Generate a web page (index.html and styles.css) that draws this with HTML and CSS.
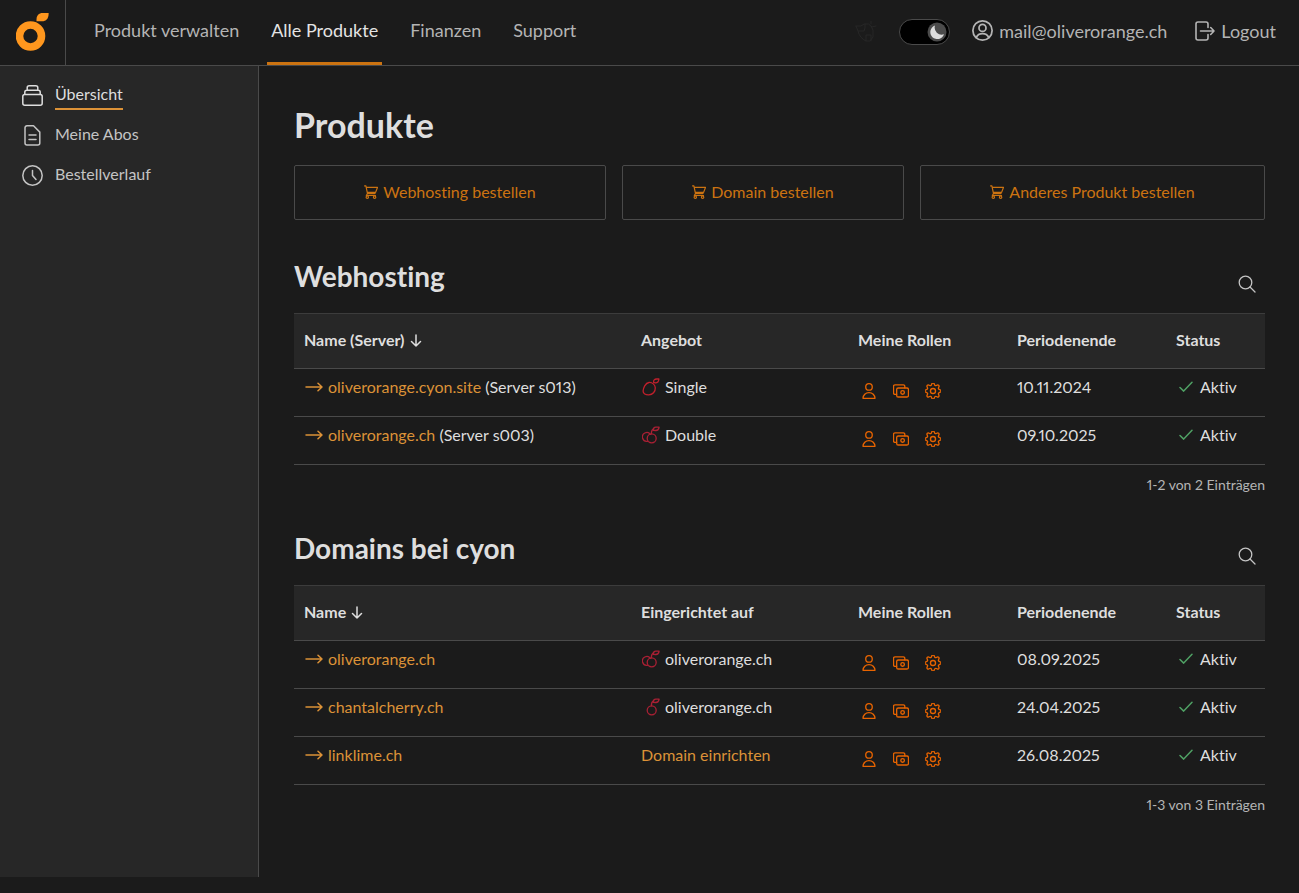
FILE: index.html
```html
<!DOCTYPE html>
<html lang="de">
<head>
<meta charset="utf-8">
<meta name="viewport" content="width=device-width, initial-scale=1">
<title>Produkte</title>
<link rel="stylesheet" href="styles.css">
</head>
<body>
<svg class="sprite" aria-hidden="true">
  <symbol id="i-person" viewBox="0 0 24 24"><circle cx="12" cy="5.900" r="4.900"/><path d="M3 23a9 8.600 0 0 1 18 0z"/></symbol>
  <symbol id="i-money" viewBox="0 0 24 24"><path d="M5.500 17H3a2.200 2.200 0 0 1-2.200-2.200V5a2.200 2.200 0 0 1 2.200-2.200h12.500a2.200 2.200 0 0 1 2.200 2.200v2.300"/><rect x="5.500" y="7.500" width="17.700" height="13.500" rx="2.400"/><circle cx="14.400" cy="14.200" r="2.700"/></symbol>
  <symbol id="i-gear" viewBox="0 0 24 24"><circle cx="12" cy="12" r="3.800"/><path transform="rotate(22.500 12 12)" d="M10.546 2.438a1.957 1.957 0 0 0 2.908 0L14.4 1.400a1.959 1.959 0 0 1 3.410 1.413l-.071 1.400A1.958 1.958 0 0 0 19.790 6.270l1.400-.071a1.959 1.959 0 0 1 1.410 3.410l-1.042.940a1.960 1.960 0 0 0 0 2.909l1.042.940a1.959 1.959 0 0 1-1.413 3.410l-1.400-.071a1.958 1.958 0 0 0-2.056 2.056l.071 1.400A1.959 1.959 0 0 1 14.400 22.600l-.941-1.041a1.959 1.959 0 0 0-2.908 0L9.606 22.600A1.959 1.959 0 0 1 6.200 21.192l.072-1.400a1.958 1.958 0 0 0-2.056-2.056l-1.400.071A1.958 1.958 0 0 1 1.400 14.400l1.041-.940a1.960 1.960 0 0 0 0-2.909L1.400 9.606A1.958 1.958 0 0 1 2.813 6.200l1.400.071a1.958 1.958 0 0 0 2.058-2.060L6.200 2.810A1.959 1.959 0 0 1 9.606 1.400z"/></symbol>
  <symbol id="i-arrow" viewBox="0 0 18 12"><path d="M1 6h16M13 2.300 17 6l-4 3.700"/></symbol>
  <symbol id="i-down" viewBox="0 0 12 14"><path d="M6 2v11M1.500 8.500 6 13l4.500-4.500"/></symbol>
  <symbol id="i-check" viewBox="0 0 14 12"><path d="m1 6.500 3.700 3.600L13 1.300"/></symbol>
  <symbol id="i-search" viewBox="0 0 18 18"><circle cx="7.500" cy="7.500" r="6.300"/><path d="m12 12 5 5"/></symbol>
  <symbol id="i-cart" viewBox="0 0 14 14"><path d="M.600.900h1.300l1.600 7.700h7.600M2.500 2.400h11l-1.900 5H3.300M3.500 8.600 2.300 10.500h9.200"/><circle cx="3.300" cy="12.200" r="1.200"/><circle cx="10.600" cy="12.200" r="1.200"/></symbol>
  <symbol id="i-single" viewBox="0 0 18 18"><path d="M7 4.500c3.300-.300 6.100 2.200 6.300 5.300.200 4-2.700 6.900-6.500 7-3.200.100-5.800-1-5.700-3.700.100-2.800 2.200-8.200 5.900-8.600z"/><path d="M11.600 4.300c-.300-2 1-3.300 3-3.300h2.300c-.200 2.400-1.700 4-3.700 3.900z"/></symbol>
  <symbol id="i-double" viewBox="0 0 18 18"><circle cx="9.700" cy="12.300" r="4.500"/><path d="M5.500 15.300a4.400 4.400 0 1 1 2.900-6.900M9.400 7.800c-.200-2.700.300-4.100 2.400-5"/><path d="M11.200 4.300c-.200-2 .900-3.100 2.700-3.100h3.200c-.300 2.300-1.500 3.500-3.600 3.300z"/></symbol>
  <symbol id="i-cherry" viewBox="0 0 18 18"><circle cx="9.700" cy="12.300" r="4.500"/><path d="M9.400 7.800c-.200-2.700.300-4.100 2.400-5"/><path d="M11.200 4.300c-.200-2 .900-3.100 2.700-3.100h3.200c-.300 2.300-1.500 3.500-3.600 3.300z"/></symbol>
</svg>

<div class="page">
  <header class="topbar">
    <a class="brand" href="#" aria-label="Startseite">
      <svg width="34" height="38" viewBox="0 0 34 38"><circle cx="14.500" cy="23" r="11" fill="none" stroke="#ff971e" stroke-width="7.600"/><path d="M20.500 8.200V6.500c0-3.900 2.300-6.500 6.200-6.500h5.900v.900c0 4.400-2.400 7.300-6.700 7.300z" fill="#ff971e"/></svg>
    </a>
    <nav class="mainnav">
      <a href="#">Produkt verwalten</a>
      <a class="active" href="#" aria-current="page">Alle Produkte</a>
      <a href="#">Finanzen</a>
      <a href="#">Support</a>
    </nav>
    <div class="account">
      <svg class="bird" width="22" height="22" viewBox="0 0 22 22"><path d="M1 5h5l3-2h4.500L17 6l4-1M1 5l2 5h6l1-3V3M3 10c1 5 4 8 8 10h4l3-4V9l-2-4M11 20v-6h5v6M16 3V0"/></svg>
      <label class="toggle" aria-label="Dunkelmodus">
        <input type="checkbox" role="switch" checked>
        <svg class="knob" width="20" height="20" viewBox="0 0 20 20"><circle cx="10" cy="10" r="9.500" fill="#4b4b4b"/><path d="M8 3.500A7 7 0 1 0 17 12.200 7 7 0 0 1 8 3.500z" fill="#dedede"/></svg>
      </label>
      <a href="#"><svg width="21" height="21" viewBox="0 0 24 24"><circle cx="12" cy="12" r="11"/><circle cx="12" cy="9" r="4"/><path d="M4.800 20.200c1.400-3.100 4.100-4.500 7.200-4.500s5.800 1.400 7.200 4.500"/></svg>mail@oliverorange.ch</a>
      <a class="logout" href="#"><svg width="20" height="20" viewBox="0 0 20 20"><path d="M13 6.500V3a2 2 0 0 0-2-2H3a2 2 0 0 0-2 2v14a2 2 0 0 0 2 2h8a2 2 0 0 0 2-2v-3.500M5.500 10H19M15.700 6.500 19 10l-3.300 3.500"/></svg>Logout</a>
    </div>
  </header>

  <div class="body">
    <aside class="sidebar">
      <nav>
        <a class="active" href="#" aria-current="page"><svg width="21" height="21" viewBox="0 0 21 21"><rect x=".800" y="9.500" width="19.400" height="10.700" rx="2"/><path d="M2.800 9.300V7.200a2 2 0 0 1 2-2h11.400a2 2 0 0 1 2 2v2.100M5.200 5V2.800a2 2 0 0 1 2-2h6.600a2 2 0 0 1 2 2V5"/></svg><span>Übersicht</span></a>
        <a href="#"><svg width="21" height="21" viewBox="0 0 21 21"><path d="M5 .800h6.500l6.300 6.300v11a2 2 0 0 1-2 2H5a2 2 0 0 1-2-2V2.800a2 2 0 0 1 2-2zM7 10h7M7 14.500h7"/></svg><span>Meine Abos</span></a>
        <a href="#"><svg width="21" height="21" viewBox="0 0 21 21"><circle cx="10.500" cy="10.500" r="9.700"/><path d="M10.500 5.500v5l3.500 4"/></svg><span>Bestellverlauf</span></a>
      </nav>
    </aside>

    <main class="content">
      <h1>Produkte</h1>
      <div class="orders">
        <a href="#"><svg width="14" height="14"><use href="#i-cart"/></svg>Webhosting bestellen</a>
        <a href="#"><svg width="14" height="14"><use href="#i-cart"/></svg>Domain bestellen</a>
        <a href="#"><svg width="14" height="14"><use href="#i-cart"/></svg>Anderes Produkt bestellen</a>
      </div>

      <section>
        <div class="section-head">
          <h2>Webhosting</h2>
          <button type="button" class="search" aria-label="Webhosting suchen"><svg width="18" height="18"><use href="#i-search"/></svg></button>
        </div>
        <table>
          <colgroup><col><col class="c-offer"><col class="c-roles"><col class="c-period"><col class="c-status"></colgroup>
          <thead>
            <tr><th scope="col"><button type="button" class="sort">Name (Server)<svg width="12" height="14"><use href="#i-down"/></svg></button></th><th scope="col">Angebot</th><th scope="col">Meine Rollen</th><th scope="col">Periodenende</th><th scope="col">Status</th></tr>
          </thead>
          <tbody>
            <tr>
              <td><a href="#"><svg class="arrow" width="18" height="12"><use href="#i-arrow"/></svg>oliverorange.cyon.site</a> (Server s013)</td>
              <td><span class="offer single"><svg width="18" height="18"><use href="#i-single"/></svg>Single</span></td>
              <td><span class="roles"><svg><use href="#i-person"/></svg><svg><use href="#i-money"/></svg><svg><use href="#i-gear"/></svg></span></td>
              <td>10.11.2024</td>
              <td><span class="status"><svg width="14" height="12"><use href="#i-check"/></svg>Aktiv</span></td>
            </tr>
            <tr>
              <td><a href="#"><svg class="arrow" width="18" height="12"><use href="#i-arrow"/></svg>oliverorange.ch</a> (Server s003)</td>
              <td><span class="offer"><svg width="18" height="18"><use href="#i-double"/></svg>Double</span></td>
              <td><span class="roles"><svg><use href="#i-person"/></svg><svg><use href="#i-money"/></svg><svg><use href="#i-gear"/></svg></span></td>
              <td>09.10.2025</td>
              <td><span class="status"><svg width="14" height="12"><use href="#i-check"/></svg>Aktiv</span></td>
            </tr>
          </tbody>
        </table>
        <p class="count">1-2 von 2 Einträgen</p>
      </section>

      <section>
        <div class="section-head">
          <h2>Domains bei cyon</h2>
          <button type="button" class="search" aria-label="Domains suchen"><svg width="18" height="18"><use href="#i-search"/></svg></button>
        </div>
        <table>
          <colgroup><col><col class="c-offer"><col class="c-roles"><col class="c-period"><col class="c-status"></colgroup>
          <thead>
            <tr><th scope="col"><button type="button" class="sort">Name<svg width="12" height="14"><use href="#i-down"/></svg></button></th><th scope="col">Eingerichtet auf</th><th scope="col">Meine Rollen</th><th scope="col">Periodenende</th><th scope="col">Status</th></tr>
          </thead>
          <tbody>
            <tr>
              <td><a href="#"><svg class="arrow" width="18" height="12"><use href="#i-arrow"/></svg>oliverorange.ch</a></td>
              <td><span class="offer"><svg width="18" height="18"><use href="#i-double"/></svg>oliverorange.ch</span></td>
              <td><span class="roles"><svg><use href="#i-person"/></svg><svg><use href="#i-money"/></svg><svg><use href="#i-gear"/></svg></span></td>
              <td>08.09.2025</td>
              <td><span class="status"><svg width="14" height="12"><use href="#i-check"/></svg>Aktiv</span></td>
            </tr>
            <tr>
              <td><a href="#"><svg class="arrow" width="18" height="12"><use href="#i-arrow"/></svg>chantalcherry.ch</a></td>
              <td><span class="offer"><svg width="18" height="18"><use href="#i-cherry"/></svg>oliverorange.ch</span></td>
              <td><span class="roles"><svg><use href="#i-person"/></svg><svg><use href="#i-money"/></svg><svg><use href="#i-gear"/></svg></span></td>
              <td>24.04.2025</td>
              <td><span class="status"><svg width="14" height="12"><use href="#i-check"/></svg>Aktiv</span></td>
            </tr>
            <tr>
              <td><a href="#"><svg class="arrow" width="18" height="12"><use href="#i-arrow"/></svg>linklime.ch</a></td>
              <td><a href="#">Domain einrichten</a></td>
              <td><span class="roles"><svg><use href="#i-person"/></svg><svg><use href="#i-money"/></svg><svg><use href="#i-gear"/></svg></span></td>
              <td>26.08.2025</td>
              <td><span class="status"><svg width="14" height="12"><use href="#i-check"/></svg>Aktiv</span></td>
            </tr>
          </tbody>
        </table>
        <p class="count">1-3 von 3 Einträgen</p>
      </section>
    </main>
  </div>
</div>
</body>
</html>
```

FILE: styles.css
```css
* {
  box-sizing: border-box;
}

body {
  margin: 0;
  background: #1b1b1b;
  color: #dedede;
  font-family: Lato, "Open Sans", sans-serif;
  font-size: 16px;
  font-variant-ligatures: none;
  font-variant-numeric: proportional-nums;
  line-height: 20px;
}

a {
  color: inherit;
  text-decoration: none;
}

button {
  padding: 0;
  border: 0;
  background: none;
  color: inherit;
  font: inherit;
  font-variant-ligatures: none;
  cursor: pointer;
}

svg {
  flex: none;
  fill: none;
  stroke: currentColor;
  stroke-linecap: round;
  stroke-linejoin: round;
}

.sprite {
  position: absolute;
  width: 0;
  height: 0;
}

.page {
  display: flex;
  flex-direction: column;
  min-height: 100vh;
  padding-bottom: 16px;
}

/* Top bar */

.topbar {
  display: flex;
  height: 66px;
  border-bottom: 1px solid #4a4a4a;
  color: #b4b4b4;
  font-size: 18px;
}

.brand {
  display: flex;
  align-items: center;
  justify-content: center;
  width: 66px;
  padding-bottom: 2px;
  border-right: 1px solid #4a4a4a;
}

.brand svg {
  stroke: none;
}

.mainnav {
  display: flex;
  gap: 24px;
  margin-left: 24px;
}

.mainnav a {
  padding: 20px 4px 0;
  border-bottom: 3px solid transparent;
}

.mainnav .active {
  border-color: #cc7311;
  color: #e4e4e4;
}

.account {
  display: flex;
  align-items: center;
  gap: 22px;
  height: 64px;
  margin-left: auto;
  padding-right: 23px;
}

.account a {
  display: flex;
  align-items: center;
  gap: 6px;
  padding-bottom: 3px;
  stroke-width: 2;
}

.account .logout {
  margin-left: 6px;
  stroke-width: 1.6;
}

.bird {
  color: #272727;
}

.toggle {
  position: relative;
  display: flex;
}

.toggle input {
  width: 51px;
  height: 26px;
  margin: 0;
  border: 1px solid #4a4a4a;
  border-radius: 13px;
  background: #000;
  appearance: none;
}

.knob {
  position: absolute;
  top: 3px;
  right: 3px;
  stroke: none;
}

/* Sidebar */

.body {
  display: flex;
  flex: 1;
}

.sidebar {
  flex: none;
  width: 259px;
  padding: 9px 22px;
  border-right: 1px solid #4a4a4a;
  background: #272727;
  color: #c4c4c4;
}

.sidebar a {
  display: flex;
  align-items: center;
  gap: 12px;
  height: 40px;
  stroke-width: 1.5;
}

.sidebar span {
  padding: 4px 0;
  border-bottom: 2px solid transparent;
}

.sidebar .active {
  color: #dedede;
}

.sidebar .active span {
  border-color: #dc9237;
}

/* Content */

.content {
  flex: 1;
  padding: 39px 34px 0 35px;
}

h1,
h2 {
  margin: 0;
  font-weight: 700;
}

h1 {
  font-size: 34px;
  line-height: 40px;
}

h2 {
  font-size: 28px;
  line-height: 32px;
}

.orders {
  display: flex;
  gap: 16px;
  margin: 20px 0 40px;
}

.orders a {
  display: flex;
  flex: 1 1 auto;
  align-items: center;
  justify-content: center;
  gap: 5px;
  height: 55px;
  padding-bottom: 2px;
  border: 1px solid #4a4a4a;
  border-radius: 2px;
  color: #cc7311;
  stroke-width: 1.2;
}

section {
  margin-bottom: 37px;
}

.section-head {
  display: flex;
  justify-content: space-between;
  height: 53px;
  padding-right: 9px;
}

.search {
  display: flex;
  align-self: flex-start;
  margin-top: 15px;
  color: #c4c4c4;
  stroke-width: 1.3;
}

table {
  width: 100%;
  border-collapse: collapse;
  table-layout: fixed;
}

.c-offer {
  width: 217px;
}

.c-roles,
.c-period {
  width: 159px;
}

.c-status {
  width: 99px;
}

tr {
  border-bottom: 1px solid #4a4a4a;
}

thead tr {
  border-top: 1px solid #3c3c3c;
  background: #272727;
}

th,
td {
  padding: 0 10px;
  text-align: left;
}

th {
  height: 55px;
  padding-bottom: 2px;
  font-weight: 700;
}

td {
  height: 48px;
  padding-top: 8px;
  vertical-align: top;
}

td a {
  color: #dc9237;
}

.sort {
  display: flex;
  align-items: center;
  gap: 5px;
  stroke-width: 1.5;
}

.arrow {
  margin: 0 5px 0 1px;
  stroke-width: 1.5;
}

.offer,
.status {
  display: flex;
  align-items: center;
}

.offer svg {
  margin: 0 5px 0 1px;
  color: #a92034;
  stroke-width: 1.3;
}

.single svg {
  color: #c0202c;
}

.status svg {
  margin: 0 7px 0 3px;
  color: #4fa064;
  stroke-width: 1.5;
}

.roles {
  display: flex;
  gap: 16px;
  padding: 6px 3px 0;
  color: #e86400;
  stroke-width: 2;
}

.roles svg {
  width: 16px;
  height: 16px;
}

.count {
  margin: 10px 0 0;
  color: #b4b4b4;
  font-size: 14px;
  text-align: right;
}
```
